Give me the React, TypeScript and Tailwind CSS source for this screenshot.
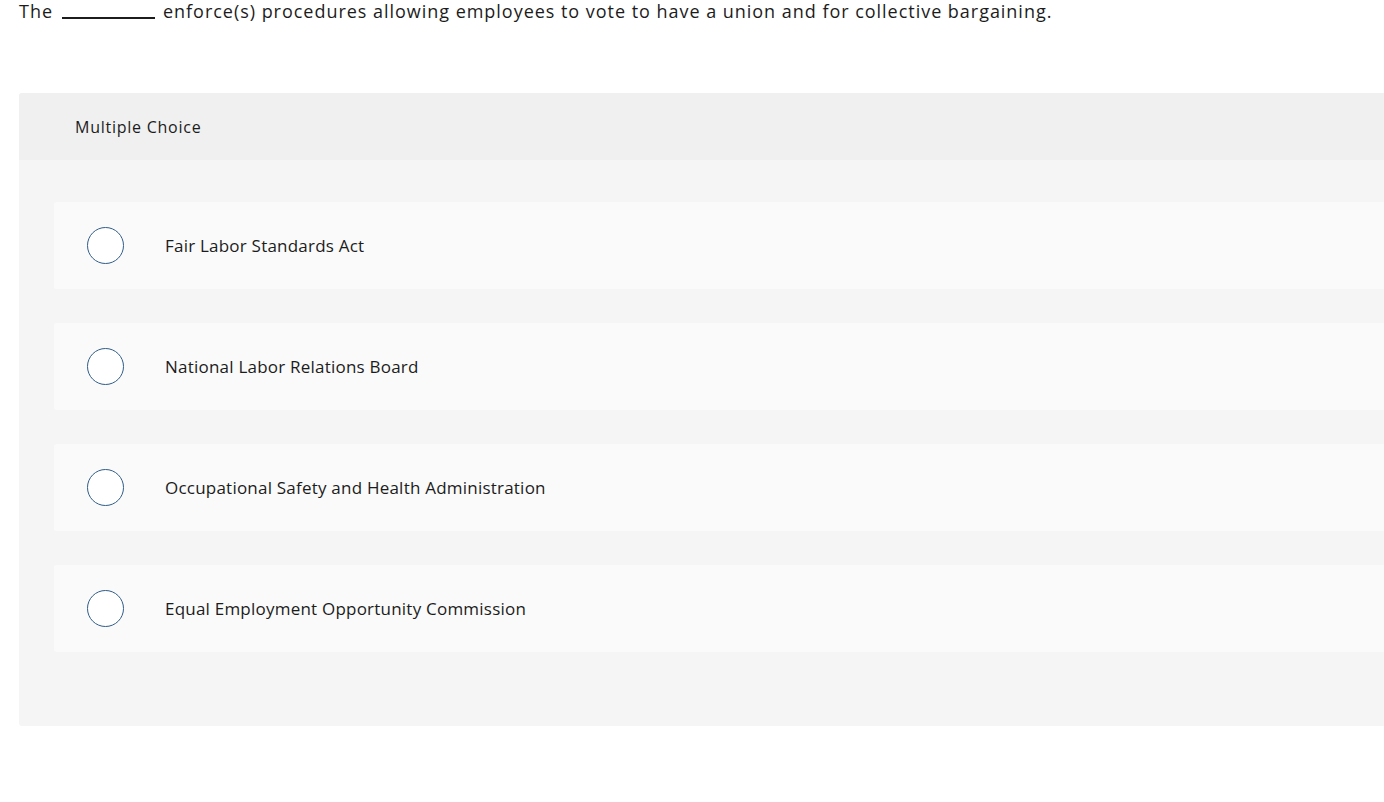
const options = [
  'Fair Labor Standards Act',
  'National Labor Relations Board',
  'Occupational Safety and Health Administration',
  'Equal Employment Opportunity Commission',
];

function Radio() {
  return <span className="block h-[37px] w-[37px] shrink-0 rounded-full border border-[#2f5d8a] bg-white" />;
}

export default function App() {
  return (
    <div className="min-h-[802px] w-full overflow-hidden bg-white text-[#1c1c1c]" style={{ fontFamily: '"Open Sans", "Noto Sans", sans-serif' }}>
      <p className="whitespace-nowrap pl-[19px] text-[18px] leading-[22px] tracking-[0.97px]">
        The<span className="ml-[9px] mr-[8px] inline-block w-[93px] border-b-2 border-[#1c1c1c] align-[-1px]" />enforce(s) procedures allowing employees to vote to have a union and for collective bargaining.
      </p>

      <div className="ml-[19px] mt-[71px] w-[1400px] overflow-hidden rounded-l-[3px] bg-[#f5f5f5]">
        <div className="flex h-[67px] items-center bg-[#f0f0f0] pl-[56px] text-[16px] tracking-[0.75px]">Multiple Choice</div>
        <div className="flex flex-col gap-[34px] pb-[74px] pl-[35px] pt-[42px]">
          {options.map((o) => (
            <div key={o} className="flex h-[87px] items-center rounded-l-[3px] bg-[#fafafa] pl-[33px]">
              <Radio />
              <span className="ml-[41px] text-[17px] tracking-[0.22px]">{o}</span>
            </div>
          ))}
        </div>
      </div>
    </div>
  );
}
